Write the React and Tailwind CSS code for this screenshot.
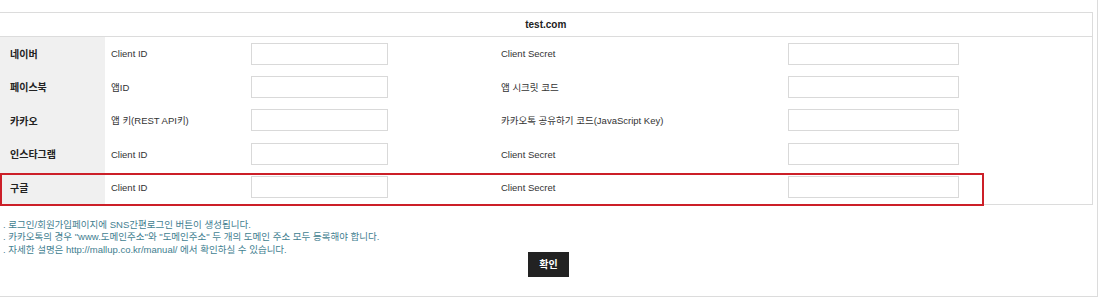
import React from "react";

const rows = [
  { name: "네이버", k1: "Client ID", k2: "Client Secret" },
  { name: "페이스북", k1: "앱ID", k2: "앱 시크릿 코드" },
  { name: "카카오", k1: "앱 키(REST API키)", k2: "카카오톡 공유하기 코드(JavaScript Key)" },
  { name: "인스타그램", k1: "Client ID", k2: "Client Secret" },
  { name: "구글", k1: "Client ID", k2: "Client Secret" },
];

const notes = [
  ". 로그인/회원가입페이지에 SNS간편로그인 버튼이 생성됩니다.",
  '. 카카오톡의 경우 "www.도메인주소"와 "도메인주소" 두 개의 도메인 주소 모두 등록해야 합니다.',
  ". 자세한 설명은 http://mallup.co.kr/manual/ 에서 확인하실 수 있습니다.",
];

function App() {
  return (
    <div
      className="relative w-[1098px] h-[297px] bg-white border-r border-b border-[#dcdcdc] text-[9.5px] text-[#333]"
      style={{ fontFamily: '"Liberation Sans", "Noto Sans CJK KR", sans-serif' }}
    >
      {/* Settings table */}
      <div className="pt-[12px]">
        <table className="w-[1092px] border-collapse table-fixed">
          <colgroup>
            <col className="w-[105px]" />
            <col className="w-[140px]" />
            <col className="w-[250px]" />
            <col className="w-[287px]" />
            <col className="w-[310px]" />
          </colgroup>
          <thead>
            <tr className="h-[24px] border-t border-b border-[#dcdcdc]">
              <th colSpan={5} className="text-center text-[10px] font-bold text-[#222] border-r border-[#dcdcdc]">
                test.com
              </th>
            </tr>
          </thead>
          <tbody className="border-r border-b border-[#dcdcdc]">
            {rows.map((r) => (
              <tr key={r.name} className="h-[33.5px]">
                <th className="bg-[#f0f0f0] text-left pl-[10px] pt-[2px] text-[10px] font-bold text-[#222]">
                  {r.name}
                </th>
                <td className="pl-[6px] pt-[2px] whitespace-nowrap">{r.k1}</td>
                <td className="pl-[6px]">
                  <input type="text" className="block w-[137px] h-[22px] border border-[#d9d9d9] outline-none" />
                </td>
                <td className="pl-[6px] pt-[2px] whitespace-nowrap">{r.k2}</td>
                <td className="pl-[6px]">
                  <input type="text" className="block w-[171px] h-[22px] border border-[#d9d9d9] outline-none" />
                </td>
              </tr>
            ))}
          </tbody>
        </table>
      </div>

      {/* Notes */}
      <div className="mt-[14px] pl-[3px] text-[#3f7e90] leading-[12.5px]">
        {notes.map((n) => (
          <p key={n}>{n}</p>
        ))}
      </div>

      {/* Confirm button */}
      <div className="flex justify-center mt-[-4px]">
        <button className="w-[41px] h-[25px] bg-[#222] text-white text-[10px] font-bold">확인</button>
      </div>

      {/* Highlight annotation */}
      <div className="absolute left-0 top-[173px] w-[984px] h-[33px] border-2 border-[#cc1f28] pointer-events-none" />
    </div>
  );
}

export default App;
